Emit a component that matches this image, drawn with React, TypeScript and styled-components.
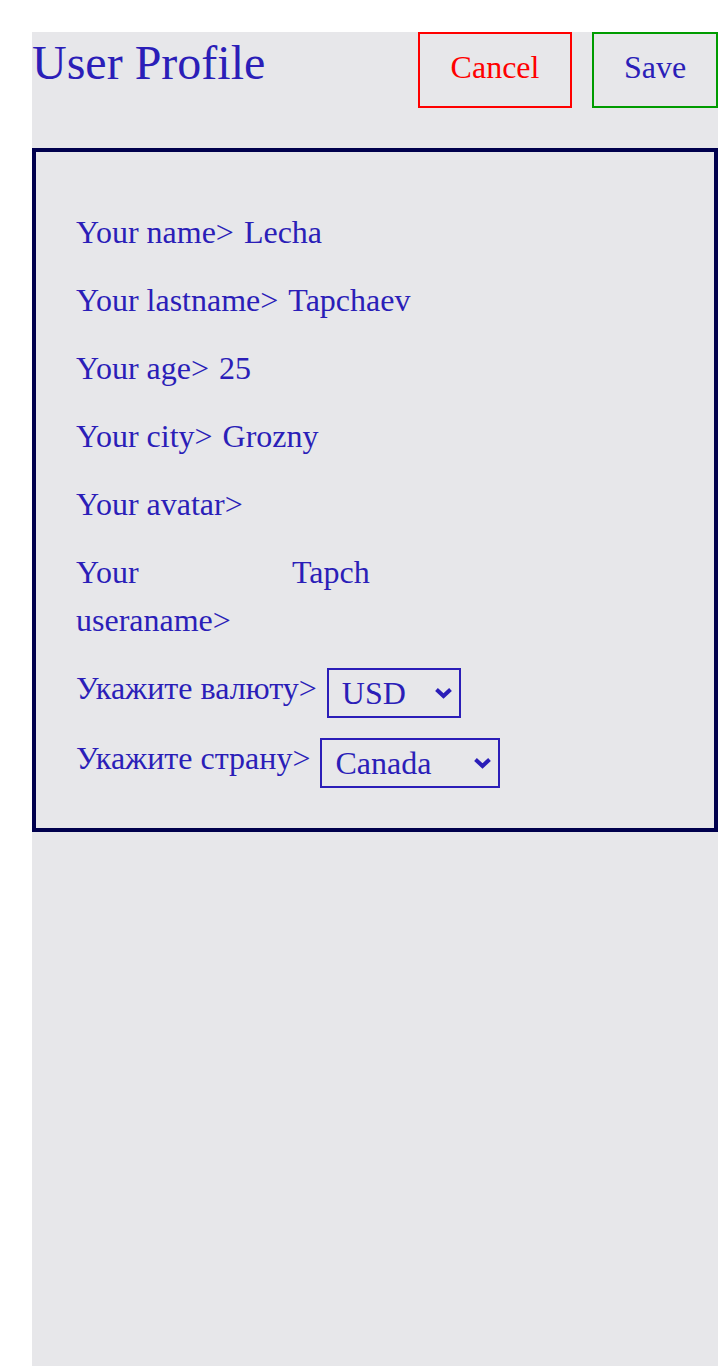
import styled, { createGlobalStyle } from "styled-components";

const GlobalStyle = createGlobalStyle`
  html, body {
    margin: 0;
    padding: 0;
    background: #ffffff;
  }
  body {
    font-family: "Liberation Serif", "Times New Roman", serif;
  }
`;

const Shell = styled.div`
  padding: 32px 0 0 32px;
`;

const Page = styled.div`
  background: #e7e7ea;
  min-height: calc(100vh - 32px);
  color: #2b1eb8;
`;

const Header = styled.header`
  display: flex;
  justify-content: space-between;
  align-items: flex-start;
  margin-bottom: 40px;
`;

const Title = styled.h1`
  margin: 0;
  font-size: 48px;
  font-weight: 400;
  line-height: 62px;
`;

const Actions = styled.div`
  display: flex;
  gap: 20px;
`;

const ActionButton = styled.button<{ $tone: string; $text: string; $w: number }>`
  box-sizing: border-box;
  width: ${(p) => p.$w}px;
  height: 76px;
  padding: 14px 0 20px;
  text-align: center;
  background: transparent;
  border: 2px solid ${(p) => p.$tone};
  color: ${(p) => p.$text};
  font-family: "Liberation Serif", "Times New Roman", serif;
  font-size: 32px;
  line-height: 38px;
  cursor: pointer;
`;

const Card = styled.form`
  display: flex;
  flex-direction: column;
  gap: 20px;
  border: 4px solid #00004d;
  padding: 56px 40px 44px;
`;

const Row = styled.div`
  display: flex;
  align-items: flex-start;
  gap: 10px;
  font-size: 32px;
  line-height: 48px;
`;

const Label = styled.label`
  flex: 0 1 auto;
`;

const Value = styled.span`
  flex: 0 0 382px;
  white-space: nowrap;
`;

const SelectWrap = styled.div`
  position: relative;
  flex: none;
  margin: 4px 0 -4px;
`;

const Select = styled.select<{ $w: number }>`
  appearance: none;
  -webkit-appearance: none;
  display: block;
  box-sizing: border-box;
  width: ${(p) => p.$w}px;
  height: 50px;
  margin: 0;
  padding: 0 40px 0 13px;
  border: 2px solid #2b1eb8;
  border-radius: 0;
  background-color: transparent;
  color: #2b1eb8;
  font-family: "Liberation Serif", "Times New Roman", serif;
  font-size: 32px;
  outline: none;
`;

const Chevron = styled.svg`
  position: absolute;
  right: 8px;
  top: 19px;
  pointer-events: none;
`;

const fields = [
  { label: "Your name>", value: "Lecha" },
  { label: "Your lastname>", value: "Tapchaev" },
  { label: "Your age>", value: "25" },
  { label: "Your city>", value: "Grozny" },
  { label: "Your avatar>", value: "" },
  { label: "Your useraname>", value: "Tapch" },
];

function Dropdown({ width, value, options }: { width: number; value: string; options: string[] }) {
  return (
    <SelectWrap>
      <Select $w={width} defaultValue={value}>
        {options.map((o) => (
          <option key={o}>{o}</option>
        ))}
      </Select>
      <Chevron width="19" height="12" viewBox="0 0 19 12">
        <polyline
          points="2.5,2.5 9.5,9 16.5,2.5"
          fill="none"
          stroke="#2b1eb8"
          strokeWidth="4"
        />
      </Chevron>
    </SelectWrap>
  );
}

export default function App() {
  return (
    <>
      <GlobalStyle />
      <Shell>
        <Page>
          <Header>
            <Title>User Profile</Title>
            <Actions>
              <ActionButton type="button" $tone="#ff0000" $text="#ff0000" $w={154}>
                Cancel
              </ActionButton>
              <ActionButton type="button" $tone="#009c00" $text="#2b1eb8" $w={126}>
                Save
              </ActionButton>
            </Actions>
          </Header>
          <Card onSubmit={(e) => e.preventDefault()}>
            {fields.map((f) => (
              <Row key={f.label}>
                <Label>{f.label}</Label>
                <Value>{f.value}</Value>
              </Row>
            ))}
            <Row>
              <Label>Укажите валюту&gt;</Label>
              <Dropdown width={134} value="USD" options={["USD", "EUR", "RUB"]} />
            </Row>
            <Row>
              <Label>Укажите страну&gt;</Label>
              <Dropdown width={180} value="Canada" options={["Canada", "USA", "Russia"]} />
            </Row>
          </Card>
        </Page>
      </Shell>
    </>
  );
}
